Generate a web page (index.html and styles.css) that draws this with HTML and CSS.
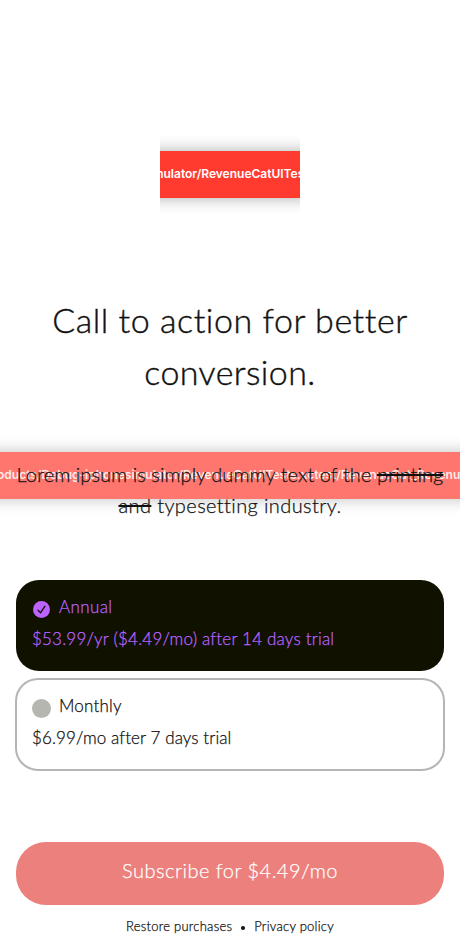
FILE: index.html
```
<!DOCTYPE html>
<html lang="en">
<head>
<meta charset="utf-8">
<title>Subscribe</title>
<link rel="stylesheet" href="styles.css">
</head>
<body>
<main class="paywall">
  <div class="icon"><div class="strip"><span class="path icon-path">Debug-iphonesimulator/RevenueCatUITests.xctest</span></div></div>
  <h1 class="title"><span class="title-a">Call to action for better</span><br><span class="title-b">conversion.</span></h1>
  <section class="offer">
    <div class="backdrop"><div class="strip faded"><span class="path wide-path">oducts/Debug-iphonesimulator/RevenueCatUITests.xctest/RevenueCat_RevenueCatUI</span></div></div>
    <p class="subtitle"><span class="sub-a">Lorem ipsum is simply dummy text of the <s>printing</s></span><br><span class="sub-b"><s>and</s> typesetting industry.</span></p>
  </section>
  <section class="packages">
    <div class="package selected">
      <div class="name"><svg class="mark" viewBox="0 0 19 19"><circle cx="9.5" cy="9.5" r="8.5" fill="#bb62ff"/><path d="M6 10.1 8.5 12.8 13 6.2" fill="none" stroke="#111100" stroke-width="1.3" stroke-linecap="round" stroke-linejoin="round"/></svg><span class="annual">Annual</span></div>
      <div class="price"><span class="annual-price">$53.99/yr ($4.49/mo) after 14 days trial</span></div>
    </div>
    <div class="package">
      <div class="name"><svg class="mark" viewBox="0 0 19 19"><circle cx="9.5" cy="9.5" r="9.5" fill="#b5b6b0"/></svg><span class="monthly">Monthly</span></div>
      <div class="price"><span class="monthly-price">$6.99/mo after 7 days trial</span></div>
    </div>
  </section>
  <button class="subscribe"><span>Subscribe for $4.49/mo</span></button>
  <footer class="links"><span class="restore">Restore purchases</span><i class="dot"></i><span class="privacy">Privacy policy</span></footer>
</main>
</body>
</html>
```
FILE: styles.css
```
* { box-sizing: border-box; }
body { margin: 0; background: #fff; color: #111; font-family: Papyrus, Lato, sans-serif; font-weight: 300; -webkit-text-stroke: .25px; }
.paywall { height: 950px; padding-top: 136px; display: flex; flex-direction: column; overflow: hidden; }
.icon { width: 140px; height: 77px; padding: 15px 0; margin: 0 auto; overflow: hidden; flex: none; }
.icon .strip { margin: 0 -20px; padding: 0 20px; }
.strip { height: 47px; background: #ff3b30; box-shadow: 0 0 16px rgba(0,0,0,.33); overflow: hidden; display: flex; align-items: center; justify-content: center; }
.path { flex: none; white-space: nowrap; color: #fff; font: 600 12px/16px Inter, sans-serif; letter-spacing: 0; -webkit-text-stroke: 0; }
.icon-path { margin: 0 0 2px -46px; }
.strip.faded { margin: 0 -20px; padding: 0 20px; background: #ff766e; box-shadow: 0 0 16px rgba(0,0,0,.25); justify-content: flex-start; }
.wide-path { margin: 0 0 2px -3px; opacity: .85; }
.title { margin: 81px 0 0; height: 104px; font-size: 34px; line-height: 52px; font-weight: 300; text-align: center; white-space: nowrap; flex: none; -webkit-text-stroke: .4px; }
.title-a { letter-spacing: .55px; }
.title-b { letter-spacing: .4px; }
.offer { height: 100px; margin-top: 38px; flex: none; display: grid; grid-template-columns: minmax(0, 1fr); }
.backdrop, .subtitle { grid-area: 1 / 1; }
.backdrop { padding-top: 16px; }
.subtitle { margin: 23px 0 0; z-index: 1; font-size: 20px; line-height: 31px; text-align: center; white-space: nowrap; }
.sub-a { letter-spacing: .07px; }
.sub-b { letter-spacing: .4px; }
s { text-decoration-thickness: 1.5px; }
.packages { margin: 44px 15px 0; display: flex; flex-direction: column; gap: 7px; flex: none; }
.package { height: 93px; padding: 12px 15px; border: 2px solid #b5b5b5; border-radius: 23px; font-size: 17px; white-space: nowrap; }
.selected { margin: 0 1px; height: 91px; padding: 12px 16px; border: 0; background: #111100; color: #bb62ff; letter-spacing: .2px; }
.name { display: flex; height: 31px; align-items: center; gap: 8px; }
.name span { margin-top: -2px; }
.mark { width: 19px; height: 19px; margin: 4px 0 0 0; }
.package:not(.selected) .name { margin-top: -1px; }
.monthly { letter-spacing: .2px; }
.annual { letter-spacing: .4px; }
.monthly-price { letter-spacing: .1px; }
.price { line-height: 31px; }
.subscribe { height: 63px; margin: 71px 16px 0; padding: 0 0 7px; border: 0; border-radius: 30px; background: #ec807c; color: #fff; font: 300 20px/31px Papyrus, Lato, sans-serif; letter-spacing: .5px; flex: none; }
.links { height: 42px; display: flex; align-items: center; justify-content: center; gap: 9px; font-size: 13px; letter-spacing: .25px; white-space: nowrap; flex: none; }
.dot { width: 4px; height: 4px; border-radius: 50%; background: #111; margin-top: 4px; }
```
